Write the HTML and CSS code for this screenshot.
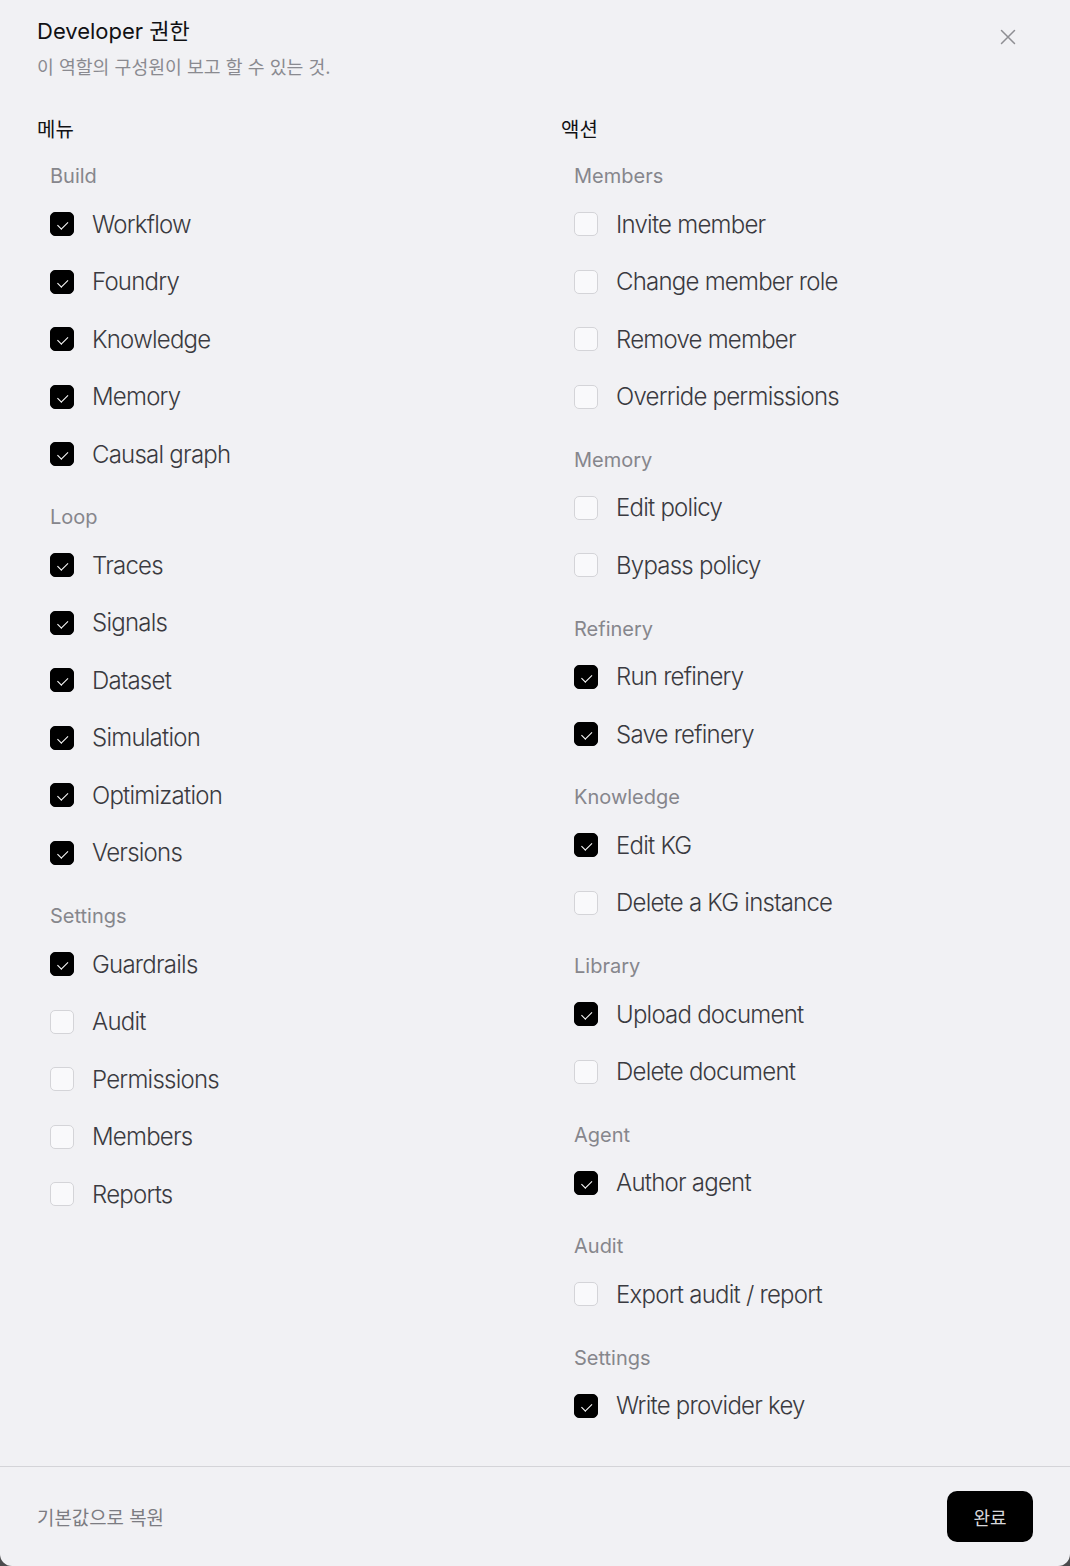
FILE: index.html
```html
<!DOCTYPE html>
<html lang="ko">
<head>
<meta charset="utf-8">
<title>Developer 권한</title>
<link rel="stylesheet" href="styles.css">
</head>
<body>
<div class="modal">
  <div class="body">
    <header class="header">
      <div class="titles">
        <h1 class="title">Developer 권한</h1>
        <p class="subtitle">이 역할의 구성원이 보고 할 수 있는 것.</p>
      </div>
      <button class="close" aria-label="닫기">
        <svg width="16" height="16" viewBox="0 0 16 16"><path d="M1.5 1.5 L14.5 14.5 M14.5 1.5 L1.5 14.5" stroke="#8e8e93" stroke-width="1.5" fill="none" stroke-linecap="round"/></svg>
      </button>
    </header>

    <div class="columns">
      <section class="col">
        <h2 class="col-title">메뉴</h2>
        <div class="group">
          <h3 class="group-title">Build</h3>
          <label class="row"><span class="cb on"></span>Workflow</label>
          <label class="row"><span class="cb on"></span>Foundry</label>
          <label class="row"><span class="cb on"></span>Knowledge</label>
          <label class="row"><span class="cb on"></span>Memory</label>
          <label class="row"><span class="cb on"></span>Causal graph</label>
        </div>
        <div class="group">
          <h3 class="group-title">Loop</h3>
          <label class="row"><span class="cb on"></span>Traces</label>
          <label class="row"><span class="cb on"></span>Signals</label>
          <label class="row"><span class="cb on"></span>Dataset</label>
          <label class="row"><span class="cb on"></span>Simulation</label>
          <label class="row"><span class="cb on"></span>Optimization</label>
          <label class="row"><span class="cb on"></span>Versions</label>
        </div>
        <div class="group">
          <h3 class="group-title">Settings</h3>
          <label class="row"><span class="cb on"></span>Guardrails</label>
          <label class="row"><span class="cb"></span>Audit</label>
          <label class="row"><span class="cb"></span>Permissions</label>
          <label class="row"><span class="cb"></span>Members</label>
          <label class="row"><span class="cb"></span>Reports</label>
        </div>
      </section>

      <section class="col">
        <h2 class="col-title">액션</h2>
        <div class="group">
          <h3 class="group-title">Members</h3>
          <label class="row"><span class="cb"></span>Invite member</label>
          <label class="row"><span class="cb"></span>Change member role</label>
          <label class="row"><span class="cb"></span>Remove member</label>
          <label class="row"><span class="cb"></span>Override permissions</label>
        </div>
        <div class="group">
          <h3 class="group-title">Memory</h3>
          <label class="row"><span class="cb"></span>Edit policy</label>
          <label class="row"><span class="cb"></span>Bypass policy</label>
        </div>
        <div class="group">
          <h3 class="group-title">Refinery</h3>
          <label class="row"><span class="cb on"></span>Run refinery</label>
          <label class="row"><span class="cb on"></span>Save refinery</label>
        </div>
        <div class="group">
          <h3 class="group-title">Knowledge</h3>
          <label class="row"><span class="cb on"></span>Edit KG</label>
          <label class="row"><span class="cb"></span>Delete a KG instance</label>
        </div>
        <div class="group">
          <h3 class="group-title">Library</h3>
          <label class="row"><span class="cb on"></span>Upload document</label>
          <label class="row"><span class="cb"></span>Delete document</label>
        </div>
        <div class="group">
          <h3 class="group-title">Agent</h3>
          <label class="row"><span class="cb on"></span>Author agent</label>
        </div>
        <div class="group">
          <h3 class="group-title">Audit</h3>
          <label class="row"><span class="cb"></span>Export audit / report</label>
        </div>
        <div class="group">
          <h3 class="group-title">Settings</h3>
          <label class="row"><span class="cb on"></span>Write provider key</label>
        </div>
      </section>
    </div>
  </div>

  <footer class="footer">
    <button class="reset">기본값으로 복원</button>
    <button class="done">완료</button>
  </footer>
</div>
</body>
</html>
```

FILE: styles.css
```css
* { box-sizing: border-box; }

html, body {
  margin: 0;
  padding: 0;
}

body {
  background: #4b4b4d;
  font-family: "Inter", "Noto Sans CJK KR", sans-serif;
  color: #18181b;
}

.modal {
  width: 1070px;
  height: 1566px;
  background: #f1f1f4;
  border-radius: 0 0 12px 12px;
  display: flex;
  flex-direction: column;
  overflow: hidden;
}

.body {
  flex: 1;
  padding: 16px 37px 0 37px;
}

.header {
  display: flex;
  justify-content: space-between;
  align-items: flex-start;
}

.title {
  margin: 0;
  font-size: 22px;
  line-height: 30px;
  font-weight: 400;
  color: #111114;
}

.subtitle {
  margin: 8px 0 0 0;
  font-size: 18.3px;
  line-height: 26px;
  font-weight: 400;
  color: #8a8a90;
}

.close {
  width: 50px;
  height: 42px;
  border: 0;
  background: transparent;
  padding: 0;
  display: flex;
  align-items: center;
  justify-content: center;
  cursor: pointer;
}

.columns {
  display: grid;
  grid-template-columns: 1fr 1fr;
  column-gap: 52px;
  margin-top: 36px;
}

.col-title {
  margin: 0 0 18px 0;
  font-size: 20px;
  line-height: 28px;
  font-weight: 400;
  color: #111114;
}

.group {
  padding-left: 13px;
  display: flex;
  flex-direction: column;
  gap: 17.5px;
}

.group + .group {
  margin-top: 29.3px;
}

.group-title {
  margin: 0 0 -3.5px 0;
  font-size: 20px;
  line-height: 28px;
  font-weight: 400;
  color: #86868c;
}

.row {
  height: 40px;
  display: flex;
  align-items: center;
  gap: 18px;
  font-size: 24px;
  letter-spacing: -0.032em;
  font-weight: 300;
  color: #3a3a40;
  cursor: pointer;
}

.cb {
  width: 24px;
  height: 24px;
  flex: none;
  border-radius: 5px;
  border: 1px solid #d4d4d8;
  background: #f9f9fb;
  position: relative;
}

.cb.on {
  background: #000;
  border-color: #000;
}

.cb.on::after {
  content: "";
  position: absolute;
  left: 8.5px;
  top: 6px;
  width: 4.5px;
  height: 8.5px;
  border-right: 1.6px solid #fff;
  border-bottom: 1.6px solid #fff;
  transform: rotate(45deg);
}

.footer {
  height: 100px;
  border-top: 1px solid #d4d4d8;
  padding: 0 37px;
  display: flex;
  align-items: center;
  justify-content: space-between;
  flex: none;
}

.reset {
  border: 0;
  background: transparent;
  padding: 0;
  font-family: inherit;
  font-size: 18.9px;
  font-weight: 400;
  color: #7c7c82;
  cursor: pointer;
}

.done {
  width: 86px;
  height: 51px;
  border: 0;
  border-radius: 10px;
  background: #000;
  color: #d8d8dc;
  font-family: inherit;
  font-size: 18px;
  cursor: pointer;
}
```
